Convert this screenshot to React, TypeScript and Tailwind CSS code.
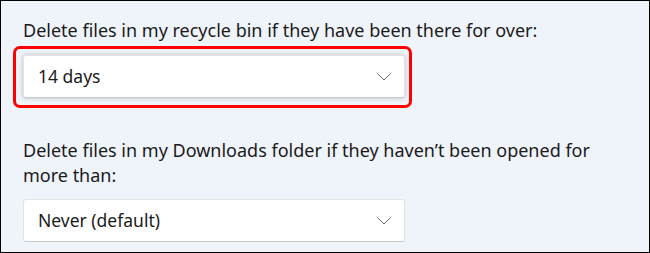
function Chevron() {
  return (
    <svg width="14" height="8" viewBox="0 0 14 8" fill="none" className="shrink-0">
      <path d="M1 1L7 7L13 1" stroke="#707070" strokeWidth="1" strokeLinecap="round" strokeLinejoin="round" />
    </svg>
  );
}

function Dropdown({ value, focused }: { value: string; focused?: boolean }) {
  return (
    <div
      className={
        "flex h-[43px] w-[382px] items-center justify-between rounded-[3px] border border-[#e3e3e3] border-b-[#c8c8c8] bg-white pl-[14px] pr-[13px] text-[17.5px] text-[#1b1b1b] " +
        (focused ? "shadow-[0_0_5px_rgba(0,0,0,0.22)]" : "")
      }
    >
      <span>{value}</span>
      <Chevron />
    </div>
  );
}

export default function App() {
  return (
    <div
      className="h-[253px] w-[650px] overflow-hidden border border-black bg-[#eff3fa] pl-[22px] pt-[17px] text-[#1b1b1b]"
      style={{ fontFamily: '"Noto Sans", "Open Sans", sans-serif' }}
    >
      <p className="text-[18px] leading-[25px]">Delete files in my recycle bin if they have been there for over:</p>
      <div className="relative mt-[12px] w-[382px]">
        <div className="pointer-events-none absolute -bottom-[10px] -left-[10px] -right-[7px] -top-[9px] rounded-[7px] border-[3px] border-[#ff0000]" />
        <Dropdown value="14 days" focused />
      </div>
      <p className="mt-[40px] max-w-[600px] text-[18px] leading-[25px]">
        Delete files in my Downloads folder if they haven’t been opened for more than:
      </p>
      <div className="mt-[11px]">
        <Dropdown value="Never (default)" />
      </div>
    </div>
  );
}
